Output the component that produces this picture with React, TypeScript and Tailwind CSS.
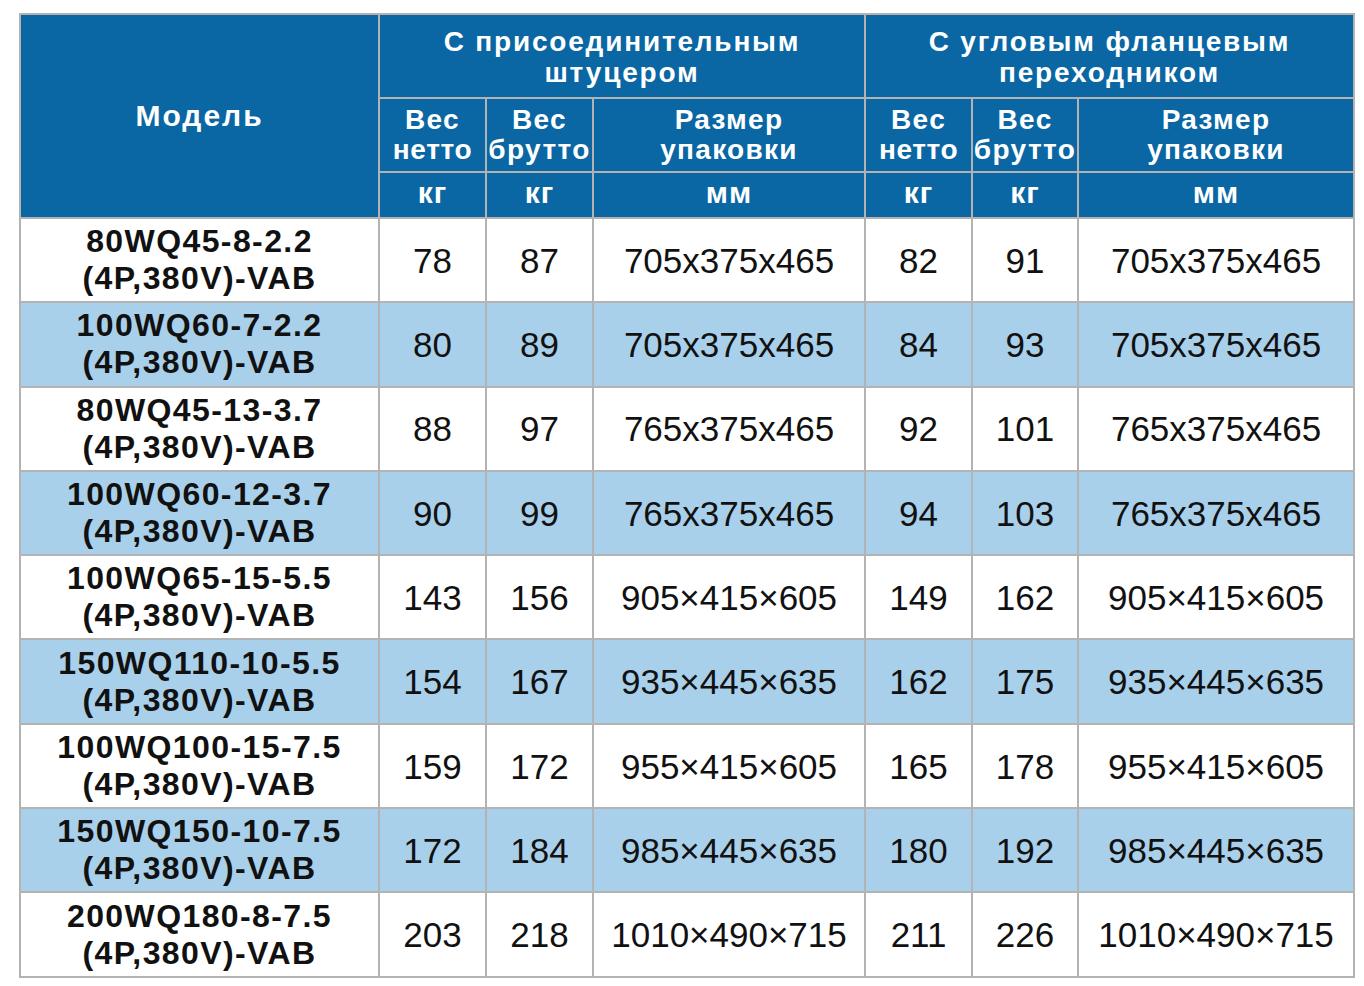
import React from 'react';

type Row = {
  model: [string, string];
  a: [string, string, string];
  b: [string, string, string];
};

const rows: Row[] = [
  { model: ['80WQ45-8-2.2', '(4P,380V)-VAB'], a: ['78', '87', '705x375x465'], b: ['82', '91', '705x375x465'] },
  { model: ['100WQ60-7-2.2', '(4P,380V)-VAB'], a: ['80', '89', '705x375x465'], b: ['84', '93', '705x375x465'] },
  { model: ['80WQ45-13-3.7', '(4P,380V)-VAB'], a: ['88', '97', '765x375x465'], b: ['92', '101', '765x375x465'] },
  { model: ['100WQ60-12-3.7', '(4P,380V)-VAB'], a: ['90', '99', '765x375x465'], b: ['94', '103', '765x375x465'] },
  { model: ['100WQ65-15-5.5', '(4P,380V)-VAB'], a: ['143', '156', '905×415×605'], b: ['149', '162', '905×415×605'] },
  { model: ['150WQ110-10-5.5', '(4P,380V)-VAB'], a: ['154', '167', '935×445×635'], b: ['162', '175', '935×445×635'] },
  { model: ['100WQ100-15-7.5', '(4P,380V)-VAB'], a: ['159', '172', '955×415×605'], b: ['165', '178', '955×415×605'] },
  { model: ['150WQ150-10-7.5', '(4P,380V)-VAB'], a: ['172', '184', '985×445×635'], b: ['180', '192', '985×445×635'] },
  { model: ['200WQ180-8-7.5', '(4P,380V)-VAB'], a: ['203', '218', '1010×490×715'], b: ['211', '226', '1010×490×715'] },
];

const th = 'border-2 border-[#b3b3b3] bg-[#0a67a3] text-white font-bold text-center align-middle p-0';
const td = 'border-2 border-[#b3b3b3] text-center align-middle p-0 text-[35px] text-[#111]';

const App: React.FC = () => {
  return (
    <div className="w-[1364px] h-[986px] bg-white pt-[13px] pl-[19px] font-['Liberation_Sans',Arial,sans-serif]">
      <table className="table-fixed border-collapse border-2 border-[#b3b3b3] w-[1334px]">
        <colgroup>
          <col className="w-[359px]" />
          <col className="w-[107px]" />
          <col className="w-[107px]" />
          <col className="w-[272px]" />
          <col className="w-[107px]" />
          <col className="w-[106px]" />
          <col className="w-[276px]" />
        </colgroup>
        <thead>
          <tr className="h-[84px]">
            <th rowSpan={3} className={`${th} text-[30px] tracking-[2px] pb-[2px]`}>Модель</th>
            <th colSpan={3} className={`${th} text-[28px] leading-[31px] tracking-[1.8px] pt-[2px]`}>
              С присоединительным
              <br />
              штуцером
            </th>
            <th colSpan={3} className={`${th} text-[28px] leading-[31px] tracking-[1.8px] pt-[2px]`}>
              С угловым фланцевым
              <br />
              переходником
            </th>
          </tr>
          <tr className="h-[74px]">
            {[0, 1].map((g) => (
              <React.Fragment key={g}>
                <th className={`${th} text-[28px] leading-[30px] tracking-[0.6px]`}>
                  <span className="tracking-[1.4px]">Вес</span>
                  <br />
                  нетто
                </th>
                <th className={`${th} text-[28px] leading-[30px] tracking-[1.4px]`}>
                  Вес
                  <br />
                  брутто
                </th>
                <th className={`${th} text-[28px] leading-[30px] tracking-[1.3px]`}>
                  Размер
                  <br />
                  упаковки
                </th>
              </React.Fragment>
            ))}
          </tr>
          <tr className="h-[46px]">
            {['кг', 'кг', 'мм', 'кг', 'кг', 'мм'].map((u, i) => (
              <th key={i} className={`${th} text-[30px] leading-[32px] tracking-[1px] pb-[4px]`}>
                {u}
              </th>
            ))}
          </tr>
        </thead>
        <tbody>
          {rows.map((r, i) => (
            <tr key={i} className={`h-[84.3px] ${i % 2 === 1 ? 'bg-[#a9d0ea]' : 'bg-white'}`}>
              <td className={`${td} !text-[32px] font-bold leading-[37px] tracking-[1.4px]`}>
                {r.model[0]}
                <br />
                {r.model[1]}
              </td>
              {[...r.a, ...r.b].map((v, j) => (
                <td key={j} className={`${td} pt-[2px]`}>
                  {v}
                </td>
              ))}
            </tr>
          ))}
        </tbody>
      </table>
    </div>
  );
};

export default App;
